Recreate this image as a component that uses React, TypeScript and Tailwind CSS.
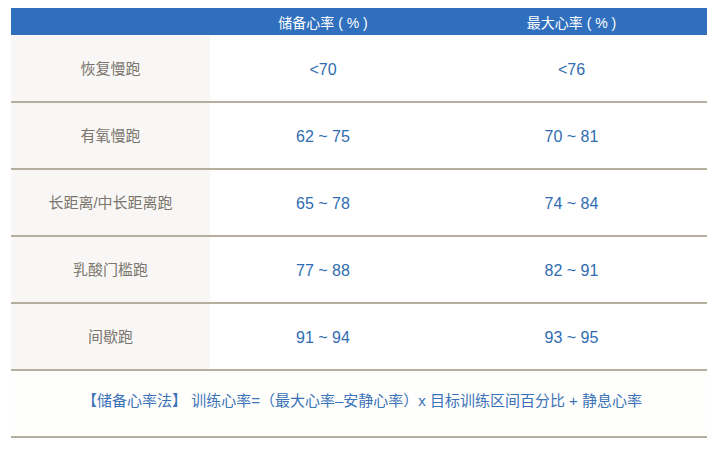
import React from "react";

const rows = [
  { name: "恢复慢跑", a: "<70", b: "<76" },
  { name: "有氧慢跑", a: "62 ~ 75", b: "70 ~ 81" },
  { name: "长距离/中长距离跑", a: "65 ~ 78", b: "74 ~ 84" },
  { name: "乳酸门槛跑", a: "77 ~ 88", b: "82 ~ 91" },
  { name: "间歇跑", a: "91 ~ 94", b: "93 ~ 95" },
];

export default function App() {
  return (
    <div
      className="w-[720px] h-[473px] bg-white pt-[8px] pl-[11px]"
      style={{ fontFamily: '"Liberation Sans", "Noto Sans CJK SC", sans-serif' }}
    >
      <div className="w-[696px]">
        <div className="flex h-[27px] bg-[#2f6fbd] text-white text-[14px]">
          <div className="w-[199px]" />
          <div className="w-[226px] flex items-center justify-center pt-[3px]">储备心率 ( % )</div>
          <div className="w-[271px] flex items-center justify-center pt-[3px]">最大心率 ( % )</div>
        </div>
        <div className="h-[1px]" />
        {rows.map((r) => (
          <div key={r.name} className="flex h-[67px] border-b-2 border-[#b5af9f]">
            <div className="w-[199px] bg-[#f8f7f5] flex items-center justify-center text-[15px] text-[#7b756d] pt-[2px]">
              {r.name}
            </div>
            <div className="w-[226px] flex items-center justify-center text-[16px] text-[#2f6cb1] pt-[2px]">
              {r.a}
            </div>
            <div className="w-[271px] flex items-center justify-center text-[16px] text-[#2f6cb1] pt-[2px]">
              {r.b}
            </div>
          </div>
        ))}
        <div className="flex h-[67px] items-center justify-center border-b-2 border-[#b5af9f] bg-[#fefefc] text-[15px] text-[#3a73b8] pb-[4px] pl-[6px]">
          【储备心率法】 训练心率=（最大心率–安静心率）x 目标训练区间百分比 + 静息心率
        </div>
      </div>
    </div>
  );
}
